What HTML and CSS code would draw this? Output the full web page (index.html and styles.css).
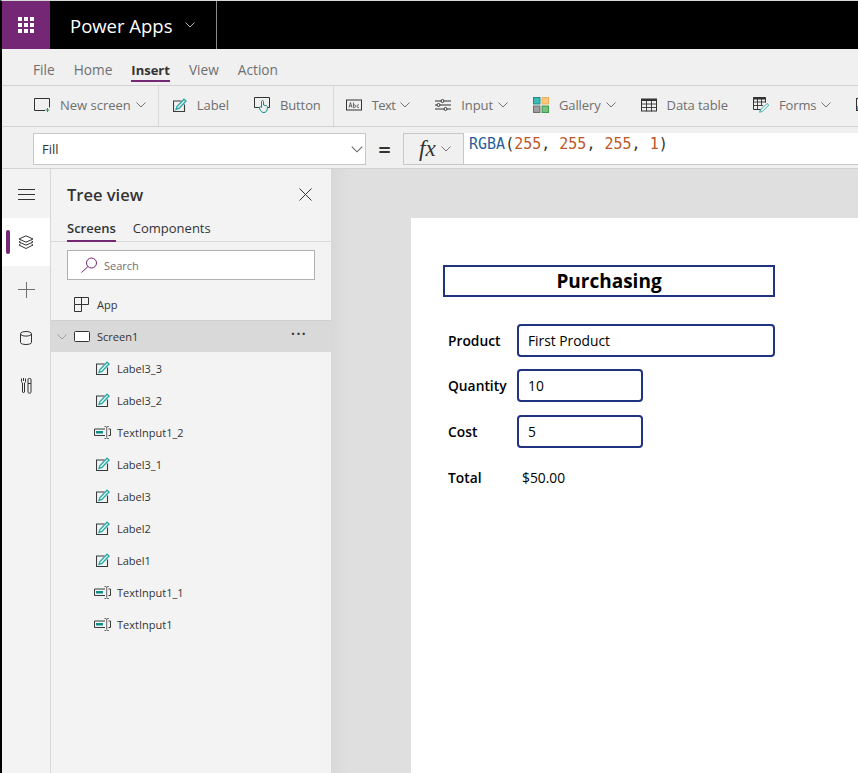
FILE: index.html
```html
<!DOCTYPE html>
<html lang="en">
<head>
    <meta charset="UTF-8">
    <meta name="viewport" content="width=device-width, initial-scale=1.0">
    <title>Power Apps</title>
    <link rel="stylesheet" href="styles.css">
</head>
<body>

<svg class="sprites" width="0" height="0">
    <symbol id="chev" viewBox="0 0 10 6"><path d="M.5.5 5 5 9.5.5" fill="none" stroke="currentColor" stroke-width=".9"/></symbol>
    <symbol id="label" viewBox="0 0 14 14">
        <path d="M8.5 3H.5v10.5h11V6.5" fill="none" stroke="#3b3b3b" stroke-width="1.1"/>
        <path d="M3 11.5l1-3L11 1.2l2 1.9-7 7.4z" fill="#e6f5f4" stroke="#2fa8a3" stroke-width="1.4"/>
    </symbol>
    <symbol id="input" viewBox="0 0 17 13">
        <path d="M11 3H.5v6.5H11M14.5 3h2v6.5h-2" fill="none" stroke="#3b3b3b"/>
        <rect x="2" y="5" width="7" height="2.5" fill="#0f8f8a"/>
        <path d="M10.5.5H12l.7.7.7-.7h1.5M12.7 1v10.5M10.500 12.5H12l.7-.7.7.7h1.5" fill="none" stroke="#3b3b3b" stroke-width=".8"/>
    </symbol>
</svg>

<header class="topbar">
    <div class="waffle">
        <svg width="16" height="16" viewBox="0 0 16 16" fill="#fff">
            <rect width="4" height="4"/><rect x="6" width="4" height="4"/><rect x="12" width="4" height="4"/>
            <rect y="6" width="4" height="4"/><rect x="6" y="6" width="4" height="4"/><rect x="12" y="6" width="4" height="4"/>
            <rect y="12" width="4" height="4"/><rect x="6" y="12" width="4" height="4"/><rect x="12" y="12" width="4" height="4"/>
        </svg>
    </div>
    <div class="brand">
        <span>Power Apps</span>
        <svg class="chev brand-chev"><use href="#chev"/></svg>
    </div>
</header>

<nav class="tabs">
    <a>File</a>
    <a>Home</a>
    <a class="active">Insert</a>
    <a>View</a>
    <a>Action</a>
</nav>

<div class="ribbon">
    <div class="ribbon-group first">
        <div class="tool">
            <svg class="tool-icon" viewBox="0 0 16 14"><path d="M11 12.5H.5V.5h15v9" fill="none" stroke="#333"/><path d="M13.500 10v4M11.500 12h4" stroke="#1f9d55"/></svg>
            <span>New screen</span>
            <svg class="chev"><use href="#chev"/></svg>
        </div>
    </div>
    <div class="ribbon-group second">
        <div class="tool">
            <svg class="tool-icon small"><use href="#label"/></svg>
            <span>Label</span>
        </div>
        <div class="tool">
            <svg class="tool-icon" viewBox="0 0 16 16"><path d="M6 10.5H.5V.5h15v10H12" fill="none" stroke="#333"/><path d="M7.5 4.5c0-1.3 2-1.3 2 0V8l3 .8c.8.3 1 1 1 1.700l-.5 2.500c-.3 1.500-1.500 2.500-3 2.500-1.500 0-2.700-.5-3.500-2L5 10.500c.3-.8 1.500-.8 2.500 0z" fill="#f0f0f0" stroke="#0f8f8a"/></svg>
            <span>Button</span>
        </div>
    </div>
    <div class="ribbon-group">
        <div class="tool">
            <svg class="tool-icon" viewBox="0 0 16 11"><rect x=".5" y=".5" width="15" height="10" fill="none" stroke="#333"/><path d="M3 8l1.500-5L6 8M3.500 6.500h2M7.500 3v5c1.500.5 2-.3 2-1.300S8.800 5 7.500 5.500M13 5.500c-1.300-.5-2 .2-2 1.200s.7 1.700 2 1.200" fill="none" stroke="#333" stroke-width=".7"/></svg>
            <span class="tight">Text</span>
            <svg class="chev"><use href="#chev"/></svg>
        </div>
        <div class="tool">
            <svg class="tool-icon" viewBox="0 0 16 13"><path d="M0 2.500h6M9 2.500h7M0 6.500h2M5 6.500h11M0 10.500h9M12 10.500h4" stroke="#333"/><circle cx="7.500" cy="2.500" r="1.500" fill="none" stroke="#333"/><circle cx="3.500" cy="6.500" r="1.500" fill="none" stroke="#333"/><circle cx="10.500" cy="10.500" r="1.500" fill="none" stroke="#333"/></svg>
            <span>Input</span>
            <svg class="chev"><use href="#chev"/></svg>
        </div>
        <div class="tool">
            <svg class="tool-icon" viewBox="0 0 15 15"><rect x=".5" y=".5" width="6" height="6" fill="#3cbcb6" stroke="#1b8f8a"/><rect x="8.5" y=".5" width="6" height="6" fill="#ffc77a" stroke="#f0b060"/><rect x=".5" y="8.5" width="6" height="6" fill="#a0a0a0" stroke="#6f6f6f"/><rect x="8.5" y="8.5" width="6" height="6" fill="#79c27f" stroke="#3f9f4f"/></svg>
            <span>Gallery</span>
            <svg class="chev"><use href="#chev"/></svg>
        </div>
        <div class="tool">
            <svg class="tool-icon" viewBox="0 0 16 13"><rect x=".5" y=".5" width="15" height="12" fill="none" stroke="#333"/><path d="M0 1.500h16" stroke="#333" stroke-width="2"/><path d="M0 5.500h16M0 9h16M5.500 2v11M10.500 2v11" stroke="#333" stroke-width=".9"/></svg>
            <span>Data table</span>
        </div>
        <div class="tool">
            <svg class="tool-icon" viewBox="0 0 16 16"><path d="M9 12.500H.5V.5h12v5" fill="none" stroke="#333"/><path d="M0 1.500h13" stroke="#333" stroke-width="2"/><path d="M0 5h13M0 8.500h10M4.500 2v10M8.500 2v7" stroke="#333" stroke-width=".9"/><path d="M7.500 13 14 6.500l1.700 1.500-6.500 6.500-2.700.7z" fill="#fff" stroke="#2fa8a3"/></svg>
            <span>Forms</span>
            <svg class="chev"><use href="#chev"/></svg>
        </div>
        <div class="tool">
            <svg class="tool-icon" viewBox="0 0 16 16"><rect x=".5" y="1.500" width="15" height="12" fill="none" stroke="#333"/><rect x="1" y="9" width="5" height="4" fill="#3cbcb6"/></svg>
        </div>
    </div>
</div>

<div class="formula-bar">
    <div class="prop-select">
        <span>Fill</span>
        <svg class="chev big"><use href="#chev"/></svg>
    </div>
    <div class="equals">=</div>
    <div class="fx">
        <i>fx</i>
        <svg class="chev"><use href="#chev"/></svg>
    </div>
    <div class="formula"><span class="fn">RGBA</span>(<span class="num">255</span>, <span class="num">255</span>, <span class="num">255</span>, <span class="num">1</span>)</div>
</div>

<main class="workspace">
    <aside class="rail">
        <div class="rail-item">
            <svg width="17" height="11" viewBox="0 0 17 11"><path d="M0 .5h17M0 5.500h17M0 10.500h17" stroke="#333"/></svg>
        </div>
        <div class="rail-item selected">
            <svg width="16" height="15" viewBox="0 0 16 15" fill="none" stroke="#333"><path d="M8 .8 15 4 8 7.200 1 4z"/><path d="M2.500 6 1 7l7 3.200L15 7l-1.500-1"/><path d="M2.500 9 1 10l7 3.500 7-3.500-1.500-1"/></svg>
        </div>
        <div class="rail-item">
            <svg width="17" height="16" viewBox="0 0 17 16"><path d="M8.500 0v16M0 7.500h17" stroke="#707070"/></svg>
        </div>
        <div class="rail-item">
            <svg width="12" height="14" viewBox="0 0 12 14" fill="none" stroke="#333"><path d="M.5 3v8.500c0 1.200 2.500 2 5.500 2s5.500-.8 5.500-2V3"/><ellipse cx="6" cy="2.800" rx="5.500" ry="2.300"/></svg>
        </div>
        <div class="rail-item">
            <svg width="11" height="16" viewBox="0 0 11 16" fill="none" stroke="#333"><path d="M.5.5v3c0 1 .7 1.500 1 1.500v9c0 .8 2 .8 2 0V5c.3 0 1-.5 1-1.500v-3M2.500 0v3M7 5.500h3v9c0 .8-3 .8-3 0zM7 5.500V1c0-.7 3-.7 3 0v4.500"/></svg>
        </div>
    </aside>

    <section class="tree">
        <div class="tree-head">
            <h2>Tree view</h2>
            <svg width="13" height="13" viewBox="0 0 13 13"><path d="M.5.5l12 12M12.500.5l-12 12" stroke="#333"/></svg>
        </div>
        <div class="tree-tabs">
            <a class="active">Screens</a>
            <a>Components</a>
        </div>
        <div class="search">
            <svg width="17" height="16" viewBox="0 0 17 16" fill="none" stroke="#742774"><circle cx="10.5" cy="6" r="5"/><path d="M7 9.500.5 15.500"/></svg>
            <span>Search</span>
        </div>
        <ul class="tree-list">
            <li class="node-app">
                <svg width="15" height="15" viewBox="0 0 15 15" fill="none" stroke="#333"><path d="M.5.5h14v7H.5zM7.5.5v14M.5 7.5v7h7"/></svg>
                <span>App</span>
            </li>
            <li class="node-screen">
                <svg class="chev light"><use href="#chev"/></svg>
                <svg width="16" height="11" viewBox="0 0 16 11"><rect x=".5" y=".5" width="15" height="10" rx="1" fill="#fff" stroke="#333"/></svg>
                <span>Screen1</span>
                <span class="dots">&middot;&middot;&middot;</span>
            </li>
            <li><svg class="node-icon"><use href="#label"/></svg><span>Label3_3</span></li>
            <li><svg class="node-icon"><use href="#label"/></svg><span>Label3_2</span></li>
            <li><svg class="node-icon-input"><use href="#input"/></svg><span>TextInput1_2</span></li>
            <li><svg class="node-icon"><use href="#label"/></svg><span>Label3_1</span></li>
            <li><svg class="node-icon"><use href="#label"/></svg><span>Label3</span></li>
            <li><svg class="node-icon"><use href="#label"/></svg><span>Label2</span></li>
            <li><svg class="node-icon"><use href="#label"/></svg><span>Label1</span></li>
            <li><svg class="node-icon-input"><use href="#input"/></svg><span>TextInput1_1</span></li>
            <li><svg class="node-icon-input"><use href="#input"/></svg><span>TextInput1</span></li>
        </ul>
    </section>

    <section class="canvas">
        <div class="screen">
            <div class="title">Purchasing</div>
            <div class="row product">
                <label>Product</label>
                <div class="field long">First Product</div>
            </div>
            <div class="row quantity">
                <label>Quantity</label>
                <div class="field">10</div>
            </div>
            <div class="row cost">
                <label>Cost</label>
                <div class="field">5</div>
            </div>
            <div class="row total">
                <label>Total</label>
                <span class="amount">$50.00</span>
            </div>
        </div>
    </section>
</main>

</body>
</html>
```

FILE: styles.css
```css
* {
    box-sizing: border-box;
}

body {
    margin: 0;
    height: 773px;
    overflow: hidden;
    display: flex;
    flex-direction: column;
    border-left: 2px solid #000;
    border-top: 1px solid #d8d8d8;
    background-color: #f0f0f0;
    font-family: 'Open Sans', sans-serif;
    color: #333;
}

.sprites {
    position: absolute;
}

.chev {
    width: 10px;
    height: 6px;
    flex: none;
    color: #666;
}

.chev.big {
    width: 12px;
    height: 7px;
}

/* top bar */
.topbar {
    height: 48px;
    flex: none;
    display: flex;
    background-color: #000;
}

.waffle {
    width: 48px;
    display: flex;
    align-items: center;
    justify-content: center;
    background-color: #742774;
}

.brand {
    width: 167px;
    display: flex;
    align-items: center;
    padding-left: 20px;
    color: #fff;
    font-size: 18.5px;
    border-right: 1px solid #8a8a8a;
}

.brand-chev {
    margin-left: 12px;
    color: #ccc;
}

/* tabs */
.tabs {
    height: 37px;
    flex: none;
    display: flex;
    gap: 19px;
    padding: 12px 0 0 31px;
    font-size: 13.7px;
    color: #6f6f6f;
    border-bottom: 1px solid #d2d2d2;
}

.tabs a {
    height: 21px;
    line-height: 18px;
}

.tabs .active {
    font-size: 13px;
    font-weight: 700;
    color: #333;
    border-bottom: 2px solid #742774;
}

/* ribbon */
.ribbon {
    height: 41px;
    flex: none;
    display: flex;
    border-bottom: 1px solid #d2d2d2;
    font-size: 13px;
    color: #6f6f6f;
    letter-spacing: -.1px;
}

.ribbon-group {
    display: flex;
    align-items: center;
    gap: 25px;
    padding: 0 13px 2px 12px;
    border-right: 1px solid #d8d8d8;
}

.ribbon-group.first {
    padding-left: 32px;
    padding-right: 12px;
    letter-spacing: 0;
}

.ribbon-group.second {
    padding-left: 14px;
    padding-right: 12px;
}

.ribbon-group:last-child {
    border-right: none;
}

.tool {
    display: flex;
    align-items: center;
    gap: 10px;
    white-space: nowrap;
}

.tool .chev {
    margin-left: -5px;
}

.tool-icon {
    width: 16px;
    height: 16px;
    flex: none;
}

.tool-icon.small {
    width: 14px;
    height: 14px;
}

.tight {
    letter-spacing: -.6px;
}

/* formula bar */
.formula-bar {
    height: 42px;
    flex: none;
    display: flex;
    padding-left: 31px;
    border-bottom: 1px solid #d2d2d2;
}

.prop-select {
    width: 333px;
    height: 32px;
    margin-top: 6px;
    display: flex;
    align-items: center;
    justify-content: space-between;
    padding: 0 2px 0 8px;
    background-color: #fff;
    border: 1px solid #c8c8c8;
    font-size: 13px;
}

.equals {
    width: 37px;
    padding-top: 7px;
    text-align: center;
    font-size: 22px;
    font-weight: 600;
    line-height: 30px;
}

.fx {
    width: 60px;
    height: 32px;
    margin-top: 6px;
    display: flex;
    align-items: center;
    gap: 5px;
    padding-left: 15px;
    border: 1px solid #c8c8c8;
    border-right: none;
}

.fx i {
    font-family: 'Liberation Serif', serif;
    font-size: 23px;
}

.formula {
    flex: 1;
    height: 32px;
    margin-top: 6px;
    padding: 1px 0 0 5px;
    background-color: #fff;
    border: 1px solid #c8c8c8;
    border-top: none;
    border-right: none;
    font-family: 'DejaVu Sans Mono', monospace;
    font-size: 15px;
    line-height: 20px;
    white-space: pre;
}

.fn {
    color: #2a5f9e;
}

.num {
    color: #c0562a;
}

/* workspace */
.workspace {
    flex: 1;
    display: flex;
    min-height: 0;
}

.rail {
    width: 49px;
    flex: none;
    padding-top: 1px;
    background-color: #f3f3f3;
    border-right: 1px solid #d8d8d8;
}

.rail-item {
    height: 48px;
    display: flex;
    align-items: center;
    justify-content: center;
    position: relative;
}

.rail-item.selected {
    background-color: #fff;
}

.rail-item.selected::before {
    content: "";
    position: absolute;
    left: 4px;
    top: 12px;
    width: 4px;
    height: 24px;
    border-radius: 2px;
    background-color: #742774;
}

/* tree */
.tree {
    width: 280px;
    flex: none;
    background-color: #f3f3f3;
}

.tree-head {
    height: 42px;
    display: flex;
    align-items: center;
    justify-content: space-between;
    padding: 9px 19px 1px 16px;
}

.tree-head h2 {
    margin: 0;
    font-size: 16.5px;
    font-weight: 600;
    color: #333;
}

.tree-tabs {
    height: 31px;
    display: flex;
    gap: 17px;
    padding: 8px 0 0 16px;
    border-bottom: 1px solid #d8d8d8;
    font-size: 13px;
}

.tree-tabs a {
    height: 23px;
    line-height: 18px;
}

.tree-tabs .active {
    font-weight: 600;
    border-bottom: 2px solid #742774;
}

.search {
    height: 30px;
    margin: 8px 16px 0;
    display: flex;
    align-items: center;
    gap: 6px;
    padding-left: 13px;
    background-color: #fff;
    border: 1px solid #b0b0b0;
    font-size: 11px;
    color: #707070;
}

.tree-list {
    margin: 8px 0 0;
    padding: 0;
    list-style: none;
    font-size: 11px;
}

.tree-list li {
    height: 32px;
    display: flex;
    align-items: center;
    gap: 7px;
    padding-left: 45px;
}

.tree-list .node-app {
    padding-left: 23px;
    gap: 8px;
}

.tree-list .node-screen {
    padding-left: 6px;
    position: relative;
    background-color: #d9d9d9;
    border-top: 1px solid #cfcfcf;
}

.light {
    color: #999;
}

.dots {
    position: absolute;
    right: 24px;
    top: 5px;
    font-size: 16px;
    font-weight: 600;
    line-height: 16px;
    letter-spacing: 1px;
}

.node-icon {
    width: 14px;
    height: 14px;
}

.node-icon-input {
    width: 17px;
    height: 13px;
    margin: 0 -1px 0 -2px;
}

/* canvas */
.canvas {
    flex: 1;
    padding: 49px 0 0 80px;
    background: linear-gradient(to right, #d8d8d8, #dfdfdf 18px) #dfdfdf;
}

.screen {
    height: 100%;
    padding: 47px 0 0 32px;
    background-color: #fff;
    font-size: 13.8px;
    color: #000;
}

.title {
    width: 332px;
    height: 32px;
    border: 2px solid #1f3380;
    text-align: center;
    font-size: 19px;
    font-weight: 700;
    line-height: 28px;
}

.row {
    display: flex;
    align-items: center;
}

.row label {
    width: 74px;
    padding-left: 5px;
    font-weight: 600;
}

.field {
    width: 126px;
    height: 33px;
    padding-left: 9px;
    border: 2px solid #1f3380;
    border-radius: 4px;
    line-height: 29px;
}

.field.long {
    width: 258px;
}

.product {
    margin-top: 27px;
}

.quantity {
    margin-top: 12px;
}

.cost {
    margin-top: 13px;
}

.total {
    margin-top: 20px;
}

.amount {
    padding-left: 5px;
}
```
